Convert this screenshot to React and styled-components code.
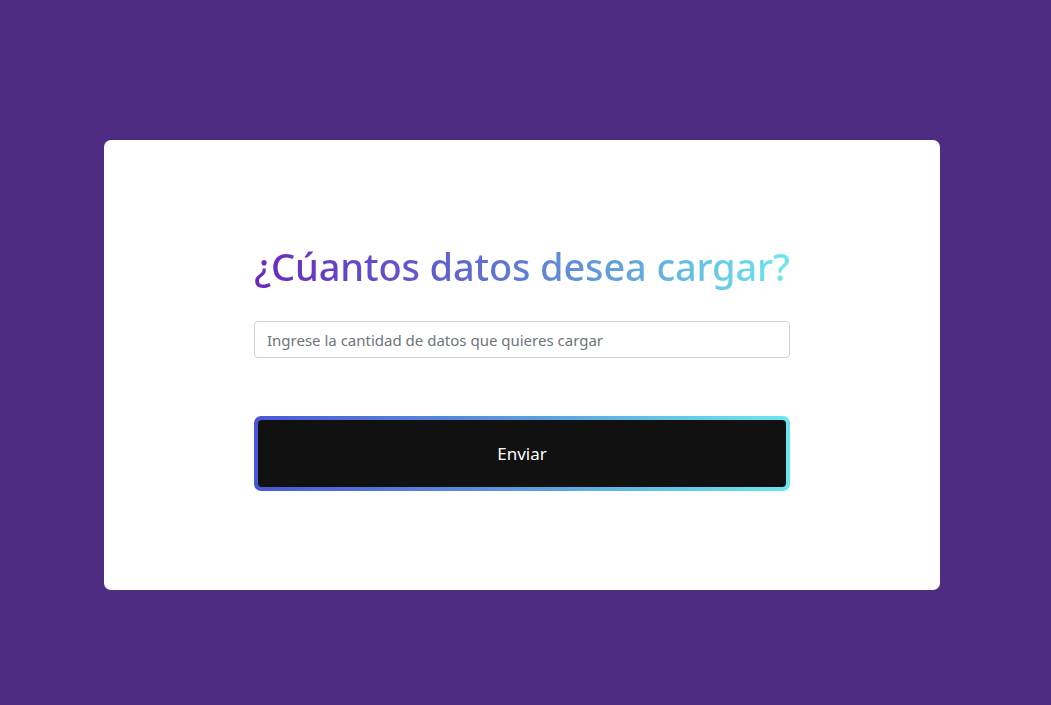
import React from "react";
import styled, { createGlobalStyle } from "styled-components";

const GlobalStyle = createGlobalStyle`
    html, body {
        margin: 0;
        padding: 0;
        background: #4e2c82;
        font-family: "Noto Sans", "Open Sans", sans-serif;
    }
`;

const Page = styled.main`
    min-height: 705px;
    padding: 140px 111px 0 104px;
    box-sizing: border-box;
`;

const Card = styled.section`
    height: 450px;
    background: #ffffff;
    border-radius: 7px;
    box-sizing: border-box;
    padding-top: 102px;
    display: flex;
    flex-direction: column;
    align-items: center;
`;

const Form = styled.form`
    width: 536px;
    display: flex;
    flex-direction: column;
`;

const Title = styled.h1`
    margin: 0 0 31px;
    font-size: 38px;
    line-height: 48px;
    font-weight: 500;
    white-space: nowrap;
    letter-spacing: -0.15px;
    text-align: center;
    background: linear-gradient(90deg, #6a28bd 0%, #5f69cf 40%, #62a6dc 70%, #6ce8e9 100%);
    -webkit-background-clip: text;
    background-clip: text;
    color: transparent;
`;

const Input = styled.input`
    height: 37px;
    box-sizing: border-box;
    padding: 0 12px;
    border: 1px solid #ced4da;
    border-radius: 4px;
    font-family: inherit;
    font-size: 15px;
    color: #495057;

    &::placeholder {
        color: #6c757d;
    }
`;

const ButtonFrame = styled.div`
    margin-top: 58px;
    padding: 4px;
    border-radius: 7px;
    background: linear-gradient(90deg, #4b57d6 0%, #5b9ade 50%, #6ae8ef 100%);
`;

const Button = styled.button`
    width: 100%;
    height: 67px;
    border: none;
    border-radius: 4px;
    background: #111111;
    color: #ffffff;
    font-family: inherit;
    font-size: 17px;
    cursor: pointer;
`;

const App = () => {
    return (
        <>
            <GlobalStyle />
            <Page>
                <Card>
                    <Form onSubmit={(e) => e.preventDefault()}>
                        <Title>¿Cúantos datos desea cargar?</Title>
                        <Input type="number" placeholder="Ingrese la cantidad de datos que quieres cargar" />
                        <ButtonFrame>
                            <Button type="submit">Enviar</Button>
                        </ButtonFrame>
                    </Form>
                </Card>
            </Page>
        </>
    );
};

export default App;
